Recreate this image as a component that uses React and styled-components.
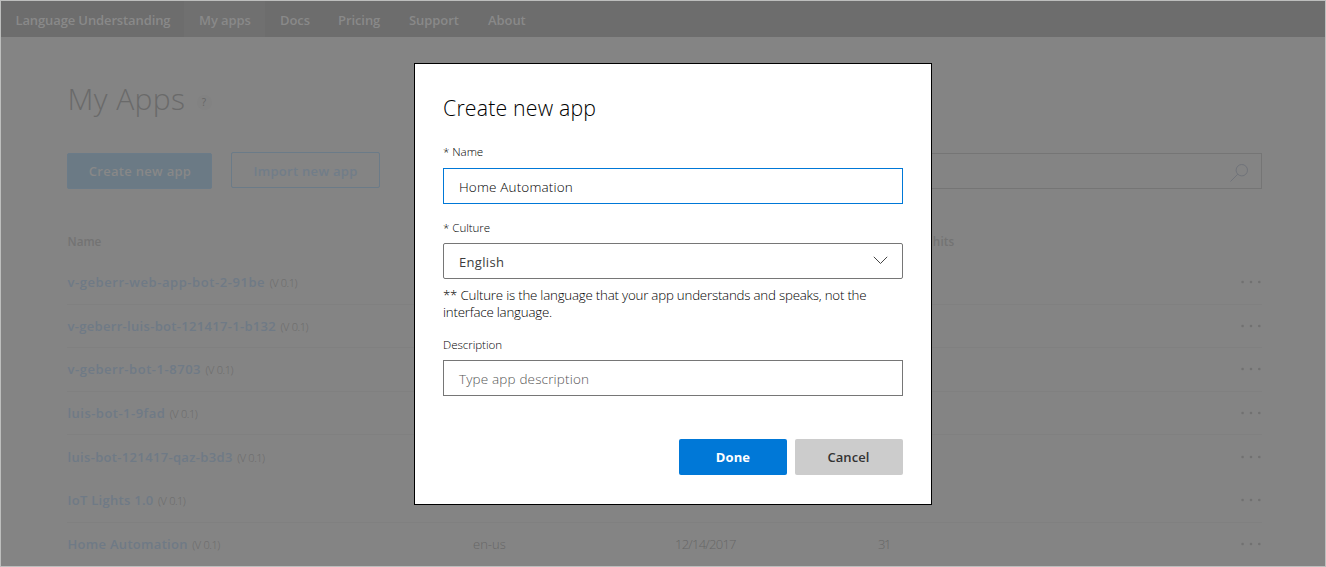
import React from 'react';
import styled, { createGlobalStyle } from 'styled-components';

const GlobalStyle = createGlobalStyle`
  *, *::before, *::after { box-sizing: border-box; }
  body { margin: 0; font-family: "Open Sans", "Noto Sans", sans-serif; }
`;

const Page = styled.div`
  position: relative;
  width: 1326px;
  height: 567px;
  overflow: hidden;
  border: 1px solid #bdbebd;
  background: #848484;
`;

const NavBar = styled.nav`
  display: flex;
  height: 36px;
  padding-left: 14.5px;
  background: #6d6d6d;
  color: #898989;
  font-size: 13px;
  font-weight: 600;
  line-height: 38px;
  letter-spacing: -0.08px;
  white-space: nowrap;
`;

const Brand = styled.span`
  width: 168.5px;
  letter-spacing: -0.12px;
`;

const NavItem = styled.a`
  width: ${(p) => p.$width}px;
  height: 36px;
  padding-left: 15px;
  background: ${(p) => (p.$active ? '#707070' : 'transparent')};
`;

const Main = styled.main`
  width: 1195px;
  margin-left: 66px;
`;

const Heading = styled.header`
  display: flex;
  align-items: center;
  height: 114px;
  padding: 9px 0 0 0.5px;
`;

const PageTitle = styled.h1`
  margin: 0;
  width: 129px;
  color: #6a6a6a;
  font-size: 30px;
  font-weight: 300;
  line-height: 40px;
  letter-spacing: 0.4px;
  white-space: nowrap;
`;

const Help = styled.span`
  width: 15px;
  height: 15px;
  margin-top: 8px;
  border-radius: 50%;
  background: #828282;
  color: #666;
  font-size: 10px;
  font-weight: 400;
  line-height: 15px;
  text-align: center;
`;

const Toolbar = styled.div`
  display: flex;
  align-items: flex-start;
  height: 71px;
`;

const ToolButton = styled.button`
  width: ${(p) => p.$width}px;
  height: 36px;
  padding: ${(p) => (p.$primary ? '0 0 0 1px' : '2px 0 0')};
  margin: ${(p) => (p.$primary ? '2px 19px 0 0' : '1px 0 0')};
  border: 1px solid #6b7b88;
  border-radius: 2px;
  background: ${(p) => (p.$primary ? '#6b7a85' : 'transparent')};
  color: ${(p) => (p.$primary ? '#888' : '#717d89')};
  font: 600 13px/32px "Open Sans", sans-serif;
  letter-spacing: 0.3px;
`;

const SearchBox = styled.div`
  display: flex;
  align-items: center;
  justify-content: flex-end;
  width: 400px;
  height: 36px;
  margin: 2px 0 0 auto;
  padding: 3px 13px 0 0;
  border: 1px solid #757575;
`;

const columns = `
  display: grid;
  grid-template-columns: 405.5px 202px 203px 1fr 22px;
  align-items: center;
  padding-left: 0.5px;
`;

const TableHead = styled.div`
  ${columns}
  height: 39px;
  padding-bottom: 1px;
  color: #737373;
  font-size: 11.7px;
  font-weight: 600;
`;

const TableRow = styled.div`
  ${columns}
  height: 43.6px;
  border-bottom: 1px solid ${(p) => (p.$ruled ? '#808080' : 'transparent')};
  color: #676767;
  font-size: 13px;
  font-weight: 300;
`;

const Cell = styled.span`
  white-space: nowrap;
  letter-spacing: ${(p) => p.$spacing || 0}px;
`;

const AppLink = styled.a`
  color: #6f7a86;
  font-size: 13px;
  font-weight: 600;
  letter-spacing: ${(p) => p.$spacing}px;
`;

const Version = styled.small`
  margin-left: 4.5px;
  color: #6a6a6a;
  font-size: 11px;
  letter-spacing: -0.5px;
  word-spacing: 0.5px;
`;

const Dialog = styled.section`
  position: absolute;
  left: 413px;
  top: 62px;
  display: flex;
  flex-direction: column;
  width: 518px;
  height: 442px;
  padding: 28px;
  border: 1px solid #000;
  background: #fff;
  color: #000;
  font-weight: 300;
`;

const DialogTitle = styled.h2`
  margin: 0;
  height: 49px;
  font-size: 21.3px;
  font-weight: 300;
  line-height: 32px;
  letter-spacing: 0.18px;
`;

const Label = styled.label`
  display: block;
  height: ${(p) => p.$height}px;
  margin-top: ${(p) => p.$gap || 0}px;
  font-size: 11.6px;
  line-height: 21px;
  letter-spacing: -0.06px;
`;

const Field = styled.div`
  display: flex;
  align-items: center;
  justify-content: space-between;
  flex: none;
  height: 36px;
  padding: 1px 14px 0 15px;
  border: 1px solid ${(p) => (p.$focused ? '#0078d7' : '#767676')};
  border-radius: ${(p) => (p.$rounded ? 2 : 0)}px;
  color: ${(p) => (p.$placeholder ? '#555' : '#000')};
  font-size: 13.5px;
  letter-spacing: 0.16px;
`;

const SelectValue = styled.span`
  color: #3c3c3c;
  font-size: 13px;
  font-weight: 400;
  letter-spacing: 0.33px;
`;

const Note = styled.p`
  margin: 8px 0 13px;
  font-size: 13.3px;
  line-height: 17px;
  letter-spacing: -0.21px;
`;

const Actions = styled.div`
  display: flex;
  justify-content: flex-end;
  gap: 8px;
  margin: auto 0 1px;
`;

const ActionButton = styled.button`
  width: 108px;
  height: 36px;
  padding: 0 ${(p) => (p.$primary ? 0 : 1)}px 0 0;
  border: 0;
  border-radius: 2px;
  background: ${(p) => (p.$primary ? '#0078d7' : '#ccc')};
  color: ${(p) => (p.$primary ? '#fff' : '#333')};
  font: ${(p) => (p.$primary ? 700 : 600)} 13px/36px "Open Sans", sans-serif;
  letter-spacing: 0.1px;
`;

const SearchIcon = () => (
  <svg width="18" height="18" viewBox="0 0 18 18" fill="none" stroke="#70737a" strokeWidth="1">
    <circle cx="11.8" cy="6.2" r="5.7" />
    <path d="M7.8 10.2 0.5 17.5" />
  </svg>
);

const MoreIcon = () => (
  <svg width="22" height="4" viewBox="0 0 22 4" fill="#717171">
    <circle cx="2.6" cy="2" r="1.3" />
    <circle cx="11" cy="2" r="1.3" />
    <circle cx="19.3" cy="2" r="1.3" />
  </svg>
);

const ChevronDown = () => (
  <svg width="15" height="12" viewBox="0 0 15 12" fill="none" stroke="#444" strokeWidth="1">
    <path d="M0.8 0.8 7.5 7.5 14.2 0.8" />
  </svg>
);

const navItems = [
  ['My apps', 81],
  ['Docs', 58],
  ['Pricing', 71],
  ['Support', 79],
  ['About', 70],
];

const apps = [
  { name: 'v-geberr-web-app-bot-2-91be', spacing: 0.56, ruled: true },
  { name: 'v-geberr-luis-bot-121417-1-b132', spacing: 0.31, ruled: true },
  { name: 'v-geberr-bot-1-8703', spacing: 0.53, ruled: true },
  { name: 'luis-bot-1-9fad', spacing: 0.47, ruled: true },
  { name: 'luis-bot-121417-qaz-b3d3', spacing: 0.33, ruled: false },
  { name: 'IoT Lights 1.0', spacing: 0.28, ruled: true },
  { name: 'Home Automation', spacing: 0.3, culture: 'en-us', date: '12/14/2017', hits: '31', ruled: false },
];

export default function App() {
  return (
    <>
      <GlobalStyle />
      <Page>
        <NavBar>
          <Brand>Language Understanding</Brand>
          {navItems.map(([label, width], i) => (
            <NavItem key={label} $width={width} $active={i === 0}>{label}</NavItem>
          ))}
        </NavBar>
        <Main>
          <Heading>
            <PageTitle>My Apps</PageTitle>
            <Help>?</Help>
          </Heading>
          <Toolbar>
            <ToolButton $primary $width={145}>Create new app</ToolButton>
            <ToolButton $width={149}>Import new app</ToolButton>
            <SearchBox><SearchIcon /></SearchBox>
          </Toolbar>
          <TableHead>
            <Cell>Name</Cell>
            <Cell />
            <Cell />
            <Cell $spacing={0.1}>Endpoint hits</Cell>
          </TableHead>
          {apps.map((app) => (
            <TableRow key={app.name} $ruled={app.ruled}>
              <Cell>
                <AppLink $spacing={app.spacing}>{app.name}</AppLink>
                <Version>(V 0.1)</Version>
              </Cell>
              <Cell>{app.culture}</Cell>
              <Cell $spacing={-0.75}>{app.date}</Cell>
              <Cell $spacing={-1.5}>{app.hits}</Cell>
              <MoreIcon />
            </TableRow>
          ))}
        </Main>
        <Dialog role="dialog">
          <DialogTitle>Create new app</DialogTitle>
          <Label $height={27}>* Name</Label>
          <Field $focused>Home Automation</Field>
          <Label $height={26} $gap={13}>* Culture</Label>
          <Field $rounded><SelectValue>English</SelectValue><ChevronDown /></Field>
          <Note>** Culture is the language that your app understands and speaks, not the interface language.</Note>
          <Label $height={26}>Description</Label>
          <Field $placeholder>Type app description</Field>
          <Actions>
            <ActionButton $primary>Done</ActionButton>
            <ActionButton>Cancel</ActionButton>
          </Actions>
        </Dialog>
      </Page>
    </>
  );
}
